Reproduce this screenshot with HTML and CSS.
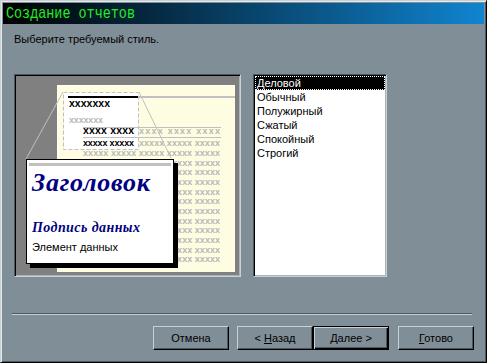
FILE: index.html
```html
<!DOCTYPE html>
<html lang="ru">
<head>
  <meta charset="UTF-8" />
  <title>Создание отчетов</title>
  <link rel="stylesheet" href="styles.css">
</head>
<body>

  <div class="window">
    <div class="titlebar">
      <span class="title">Создание отчетов</span>
    </div>

    <div class="content">
      <p class="prompt">Выберите требуемый стиль.</p>

      <div class="panes">
        <!-- Preview of the selected style -->
        <div class="preview">
          <svg width="223" height="199" viewBox="0 0 223 199">
            <rect width="223" height="199" fill="#808080"/>
            <rect x="41" y="9" width="178" height="187" fill="#fffde1"/>
            <path d="M41.5 196V9.5H219" stroke="#fffff6" fill="none"/>

            <rect x="47.5" y="16.5" width="75" height="57" fill="#fff" stroke="#c0c0c0" stroke-dasharray="4 2"/>
            <rect x="52" y="20" width="70" height="2" fill="#000"/>
            <rect x="122" y="20" width="97" height="2" fill="#c0c0c0"/>
            <text class="x-head" x="53" y="31" textLength="41">xxxxxxx</text>
            <text class="x-gray" x="53" y="47" textLength="34">xxxxxxx</text>

            <rect x="67" y="51" width="138" height="1" fill="#c0c0c0"/>
            <text class="x-head" x="67" y="58" textLength="51">xxxx xxxx</text>
            <text class="x-gray" x="123" y="58" textLength="81">xxxx xxxx xxxx</text>
            <rect x="67" y="61" width="138" height="1" fill="#c0c0c0"/>
            <text class="x-black" x="67" y="70" textLength="51">xxxxx xxxxx</text>
            <text class="x-gray" x="123" y="70" textLength="81">xxxxx xxxxx xxxxx</text>
            <text class="x-gray" x="67" y="80" textLength="137">xxxxx xxxxx xxxxx xxxxx xxxxx</text>

            <!-- rows behind the callout: only the right part shows -->
            <text class="x-gray" x="151" y="89.7" textLength="53">xxxxx xxxxx</text>
            <text class="x-gray" x="151" y="99.3" textLength="53">xxxxx xxxxx</text>
            <text class="x-gray" x="151" y="109" textLength="53">xxxxx xxxxx</text>
            <text class="x-gray" x="151" y="118.7" textLength="53">xxxxx xxxxx</text>
            <text class="x-gray" x="151" y="128.3" textLength="53">xxxxx xxxxx</text>
            <text class="x-gray" x="151" y="138" textLength="53">xxxxx xxxxx</text>
            <text class="x-gray" x="151" y="147.7" textLength="53">xxxxx xxxxx</text>
            <text class="x-gray" x="151" y="157.3" textLength="53">xxxxx xxxxx</text>
            <text class="x-gray" x="151" y="167" textLength="53">xxxxx xxxxx</text>
            <text class="x-gray" x="151" y="176.7" textLength="53">xxxxx xxxxx</text>
            <text class="x-gray" x="151" y="186.3" textLength="53">xxxxx xxxxx</text>

            <line x1="47" y1="16" x2="10" y2="83" stroke="#c0c0c0"/>
            <line x1="123" y1="16" x2="155" y2="82" stroke="#c0c0c0"/>

            <!-- magnified callout -->
            <rect x="14" y="87" width="148" height="105" fill="#000"/>
            <rect x="10.5" y="83.5" width="147" height="104" fill="#fff" stroke="#000"/>
            <rect x="13" y="87" width="142" height="3" fill="#c0c0c0"/>
            <text class="callout-title" x="16" y="115" textLength="118">Заголовок</text>
            <text class="callout-caption" x="16" y="156" textLength="108">Подпись данных</text>
            <text class="callout-item" x="16" y="174.5">Элемент данных</text>
          </svg>
        </div>

        <!-- Style list -->
        <ul class="styles">
          <li class="selected">Деловой</li>
          <li>Обычный</li>
          <li>Полужирный</li>
          <li>Сжатый</li>
          <li>Спокойный</li>
          <li>Строгий</li>
        </ul>
      </div>

      <div class="separator"></div>

      <div class="buttons">
        <button class="btn btn-cancel">Отмена</button>
        <button class="btn">&lt; <u>Н</u>азад</button>
        <button class="btn btn-default"><u>Д</u>алее &gt;</button>
        <button class="btn btn-finish"><u>Г</u>отово</button>
      </div>
    </div>
  </div>

</body>
</html>
```

FILE: styles.css
```css
* {
  box-sizing: border-box;
  margin: 0;
  padding: 0;
}

body {
  width: 487px;
  height: 363px;
  overflow: hidden;
  font-family: "Liberation Sans", Arial, sans-serif;
  font-size: 11px;
  color: #000;
}

.window {
  width: 487px;
  height: 363px;
  display: flex;
  flex-direction: column;
  padding: 2px;
  background: #808f97;
  border: 1px solid;
  border-color: #c8d0d4 #000 #000 #c8d0d4;
  box-shadow: inset 1px 1px #e4eaec, inset -1px -1px #4c585e;
}

.titlebar {
  height: 21px;
  padding-left: 3px;
  line-height: 21px;
  background: linear-gradient(to right, #000 0%, #1084d0 100%);
  overflow: hidden;
}

.title {
  display: inline-block;
  font-family: "Liberation Mono", monospace;
  font-size: 17px;
  color: #22ee22;
  white-space: nowrap;
  transform: scaleX(0.79);
  transform-origin: left center;
}

.content {
  flex: 1;
  display: flex;
  flex-direction: column;
  padding: 9px 10px 0 11px;
}

.prompt {
  line-height: 13px;
}

.panes {
  display: flex;
  gap: 12px;
  margin-top: 28px;
}

.preview,
.styles {
  height: 203px;
  padding: 1px;
  border: 1px solid;
  border-color: #4c585e #c8d0d4 #c8d0d4 #4c585e;
  box-shadow: inset 1px 1px #000, inset -1px -1px #a8b4ba;
}

.preview {
  width: 227px;
}

.preview svg {
  display: block;
}

.x-head {
  font: bold 10.5px "Liberation Sans", sans-serif;
  fill: #000;
}

.x-black {
  font: bold 9px "Liberation Sans", sans-serif;
  fill: #000;
}

.x-gray {
  font: bold 9px "Liberation Sans", sans-serif;
  fill: #b8b8b8;
}

.callout-title {
  font: italic bold 26px "Liberation Serif", serif;
  fill: #000080;
}

.callout-caption {
  font: italic bold 14px "Liberation Serif", serif;
  fill: #000080;
}

.callout-item {
  font: 11px "Liberation Sans", sans-serif;
  fill: #000;
}

.styles {
  width: 134px;
  list-style: none;
  background: #fff;
}

.styles li {
  height: 14px;
  line-height: 14px;
  padding-left: 2px;
  white-space: nowrap;
}

.styles li.selected {
  background: #000;
  color: #fff;
  outline: 1px dotted #fff;
  outline-offset: -1px;
}

.separator {
  width: 460px;
  margin: 36px 0 0 -2px;
  border-top: 1px solid #4c585e;
  border-bottom: 1px solid #c8d0d4;
}

.buttons {
  display: flex;
  justify-content: flex-end;
  margin-top: 11px;
}

.btn {
  width: 76px;
  height: 24px;
  font-family: "Liberation Sans", Arial, sans-serif;
  font-size: 11px;
  color: #000;
  background: #808f97;
  border: 1px solid;
  border-color: #c8d0d4 #000 #000 #c8d0d4;
  box-shadow: inset -1px -1px #4c585e;
}

.btn u {
  text-decoration: underline;
}

.btn-cancel {
  margin-right: 8px;
}

.btn-default {
  border-color: #000;
  box-shadow: inset 1px 1px #c8d0d4, inset -1px -1px #000, inset -2px -2px #4c585e;
}

.btn-finish {
  margin-left: 9px;
}
```
